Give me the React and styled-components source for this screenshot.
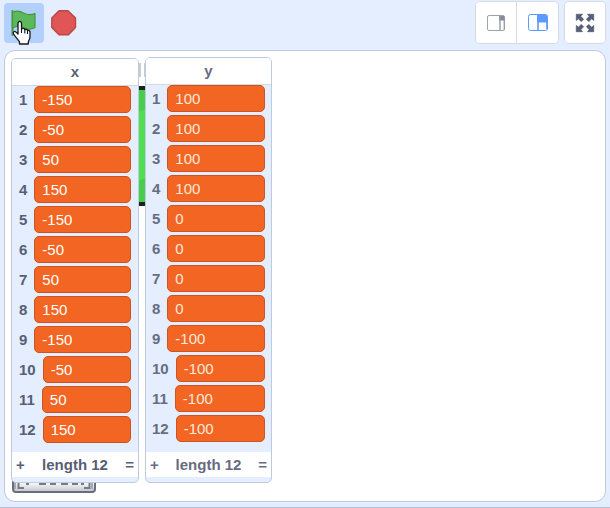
import React from "react";
import styled, { createGlobalStyle } from "styled-components";

const GlobalStyle = createGlobalStyle`
  * { box-sizing: border-box; }
  body {
    margin: 0;
    background: #e5eeff;
    font-family: "Liberation Sans", Arial, sans-serif;
    color: #575e75;
  }
  button { font: inherit; color: inherit; cursor: pointer; }
`;

const Page = styled.div`
  min-height: 100vh;
  display: flex;
  flex-direction: column;
  padding: 0 4px 5px;
  border-bottom: 1px solid #b4bfd2;
`;

const Header = styled.header`
  display: flex;
  justify-content: space-between;
  height: 50px;
  padding-top: 1px;
`;

const Controls = styled.div`
  display: flex;
  padding-top: 2px;
`;

const ControlButton = styled.button`
  position: relative;
  width: 40px;
  height: 40px;
  padding: 7px;
  border: 0;
  border-radius: 4px;
  background: ${(p) => (p.$active ? "#b3cffc" : "transparent")};
  svg { display: block; }
`;

const Pointer = styled.svg`
  position: absolute;
  left: 8px;
  top: 17px;
`;

const SizeControls = styled.div`
  display: flex;
  gap: 5px;
`;

const ButtonGroup = styled.div`
  display: flex;
  height: 43px;
  border: 1px solid #d3d9e5;
  border-radius: 5px;
  background: #fff;
  overflow: hidden;
`;

const SizeButton = styled.button`
  display: flex;
  align-items: center;
  justify-content: center;
  width: ${(p) => (p.$wide ? 42 : 40)}px;
  padding: 0;
  border: 0;
  background: #fff;
  & + & { border-left: 1px solid #d3d9e5; }
`;

const Stage = styled.main`
  position: relative;
  flex: 1;
  min-height: 452px;
  border: 1px solid #bdcae0;
  border-radius: 11px;
  background: #fff;
  overflow: hidden;
`;

const Sprite = styled.svg`
  position: absolute;
  left: ${(p) => p.$x}px;
  top: ${(p) => p.$y}px;
`;

const Monitor = styled.section`
  position: absolute;
  left: ${(p) => p.$x}px;
  top: ${(p) => p.$y}px;
  width: ${(p) => p.$width}px;
  padding-bottom: 5px;
  border: 1px solid #bdcbe1;
  border-radius: 5px;
  background: #e5eeff;
  overflow: hidden;
  font-size: 15px;
  color: ${(p) => (p.$dragging ? "#666c82" : "#575e75")};
`;

const MonitorTitle = styled.h2`
  margin: 0;
  height: 27px;
  border-bottom: 1px solid #d3d9e3;
  background: #fff;
  font-size: 15px;
  line-height: 26px;
  text-align: center;
`;

const Rows = styled.ol`
  display: flex;
  flex-direction: column;
  gap: 3px;
  margin: 0;
  padding: 0 ${(p) => p.$side}px ${(p) => p.$tail}px;
  list-style: none;
`;

const Row = styled.li`
  display: flex;
  align-items: center;
  gap: 7px;
  height: 27px;
`;

const Index = styled.span`
  font-weight: 700;
`;

const Value = styled.span`
  flex: 1;
  height: 27px;
  padding-left: 7px;
  border: 1px solid #cc5422;
  border-radius: 5px;
  background: #f26522;
  color: ${(p) => (p.$dragging ? "#ffe9dd" : "#fff")};
  line-height: 25px;
`;

const Footer = styled.footer`
  display: flex;
  justify-content: space-between;
  align-items: center;
  height: 25px;
  padding: 0 4px;
  background: #fff;
  font-weight: 700;
`;

const FooterButton = styled.button`
  padding: 0;
  border: 0;
  background: none;
  font-weight: 700;
  line-height: 20px;
`;

const lists = [
  {
    name: "x", left: 6, top: 7, width: 128, side: 7, tail: 9, dragging: false,
    values: [-150, -50, 50, 150, -150, -50, 50, 150, -150, -50, 50, 150],
  },
  {
    name: "y", left: 140, top: 6, width: 127, side: 6, tail: 10, dragging: true,
    values: [100, 100, 100, 100, 0, 0, 0, 0, -100, -100, -100, -100],
  },
];

function ListMonitor({ list }) {
  return (
    <Monitor
      $x={list.left}
      $y={list.top}
      $width={list.width}
      $dragging={list.dragging}
      aria-label={`List ${list.name}`}
    >
      <MonitorTitle>{list.name}</MonitorTitle>
      <Rows $side={list.side} $tail={list.tail}>
        {list.values.map((value, i) => (
          <Row key={i}>
            <Index>{i + 1}</Index>
            <Value $dragging={list.dragging}>{value}</Value>
          </Row>
        ))}
      </Rows>
      <Footer>
        <FooterButton aria-label="Add item">+</FooterButton>
        <span>length {list.values.length}</span>
        <FooterButton aria-label="Resize list">=</FooterButton>
      </Footer>
    </Monitor>
  );
}

const FlagIcon = () => (
  <svg width="26" height="26" viewBox="0 0 26 26">
    <path d="M1.500 1v24" stroke="#45993d" strokeWidth="2" strokeLinecap="round" />
    <path d="M1.500 2.500C6 0 9 .8 12.500 3c4 2.300 7 2.500 11.500.5v14c-4.500 2.500-8 2-11.500 0-4-2.300-7-1.800-11 .5z" fill="#5cb85a" stroke="#45993d" strokeWidth="1.200" strokeLinejoin="round" />
  </svg>
);

const StopIcon = () => (
  <svg width="26" height="26" viewBox="0 0 26 26">
    <path d="M8 .8h9L24.500 8v9.500L17.500 24.800H8L.8 17.500V8z" fill="#e05656" stroke="#b84848" strokeWidth="1.400" strokeLinejoin="round" />
  </svg>
);

const HandPointer = () => (
  <Pointer width="21" height="26" viewBox="0 0 21 26" aria-hidden="true">
    <path
      d="M6 14V3.500C6 .6 9.500.6 9.500 3.500V9c1-1 3-.7 3.300.6 1-.7 2.500-.3 2.700.9 1.200-.5 2.500.2 2.500 1.600v5c0 2-1.200 3-1.700 5V24H7.500v-2.200c-1-2-4.500-5-6-8-.8-2 1-3 2.300-1.900z"
      fill="#fff" stroke="#16181f" strokeWidth="1.300" strokeLinejoin="round"
    />
    <path d="M9.500 9v4M12.800 10v3.500M15.500 11v3" stroke="#16181f" strokeWidth="1.100" />
  </Pointer>
);

const SmallStageIcon = () => (
  <svg width="20" height="18" viewBox="0 0 20 18">
    <rect x="1.500" y="1.500" width="17" height="15" rx="1.500" fill="#fff" stroke="#9da2ac" />
    <path d="M13 2h4.500q1 0 1 1v3.500H13z" fill="#858b98" />
    <path d="M14 2v14.500" stroke="#959aa6" strokeWidth="1.400" />
    <path d="M18.300 6v9.500" stroke="#959aa6" strokeWidth="1.400" />
  </svg>
);

const LargeStageIcon = () => (
  <svg width="20" height="18" viewBox="0 0 20 18">
    <rect x=".5" y=".5" width="19" height="16" rx="2" fill="#fff" stroke="#5a9bff" />
    <path d="M9 1h8.500q2 0 2 2v5.500H9z" fill="#5a9bff" />
    <path d="M10 1v15.500M19 8v7" stroke="#5a9bff" strokeWidth="1.600" />
  </svg>
);

const FullscreenIcon = () => (
  <svg width="20" height="20" viewBox="0 0 20 20">
    {[0, 90, 180, 270].map((angle) => (
      <g key={angle} transform={`rotate(${angle} 10 10)`}>
        <path d="M1.300 1.300H7.500L5.700 3.300 8.600 6.200 6.200 8.600 3.300 5.700 1.300 7.500z" fill="#575e75" stroke="#575e75" strokeWidth=".8" strokeLinejoin="round" />
      </g>
    ))}
  </svg>
);

const GreenSprite = () => (
  <Sprite $x={130} $y={12} width="14" height="144" viewBox="0 0 14 144" aria-hidden="true">
    <path d="M3 0h3v14H3zM9 0h2v14H9z" fill="#c9cbd2" />
    <path d="M0 23h14v120H0z" fill="#18221f" />
    <path d="M0 27h14v112H0z" fill="#4fe052" />
    <path d="M0 27h14v18l-14 5zM0 120l14-7v26H0z" fill="#49ce4c" />
  </Sprite>
);

const ButtonSprite = () => (
  <Sprite $x={7} $y={422} width="84" height="20" viewBox="0 0 84 20" aria-hidden="true">
    <defs>
      <linearGradient id="metal" x1="0" x2="0" y1="0" y2="1">
        <stop offset=".6" stopColor="#fafafa" />
        <stop offset="1" stopColor="#c2c3cc" />
      </linearGradient>
    </defs>
    <rect x="1" y="-4" width="82" height="23" rx="3" fill="url(#metal)" stroke="#6a6d7e" strokeWidth="2" />
    <path d="M3 8v8M80 8v8" stroke="#a5a7b2" strokeWidth="2" />
    <path d="M6.500 8v7H12M77.500 8v7H72" fill="none" stroke="#777a88" strokeWidth="2" />
    <path d="M14 11h3M27 11h7M38 11h6M49 11h7M60 11h6M69 11h3" stroke="#777a88" strokeWidth="2" />
  </Sprite>
);

export default function App() {
  return (
    <>
      <GlobalStyle />
      <Page>
        <Header>
          <Controls>
            <ControlButton $active aria-label="Go">
              <FlagIcon />
              <HandPointer />
            </ControlButton>
            <ControlButton aria-label="Stop">
              <StopIcon />
            </ControlButton>
          </Controls>
          <SizeControls>
            <ButtonGroup>
              <SizeButton aria-label="Small stage"><SmallStageIcon /></SizeButton>
              <SizeButton $wide aria-label="Large stage"><LargeStageIcon /></SizeButton>
            </ButtonGroup>
            <ButtonGroup>
              <SizeButton aria-label="Full screen"><FullscreenIcon /></SizeButton>
            </ButtonGroup>
          </SizeControls>
        </Header>
        <Stage>
          <GreenSprite />
          <ButtonSprite />
          {lists.map((list) => <ListMonitor key={list.name} list={list} />)}
        </Stage>
      </Page>
    </>
  );
}
